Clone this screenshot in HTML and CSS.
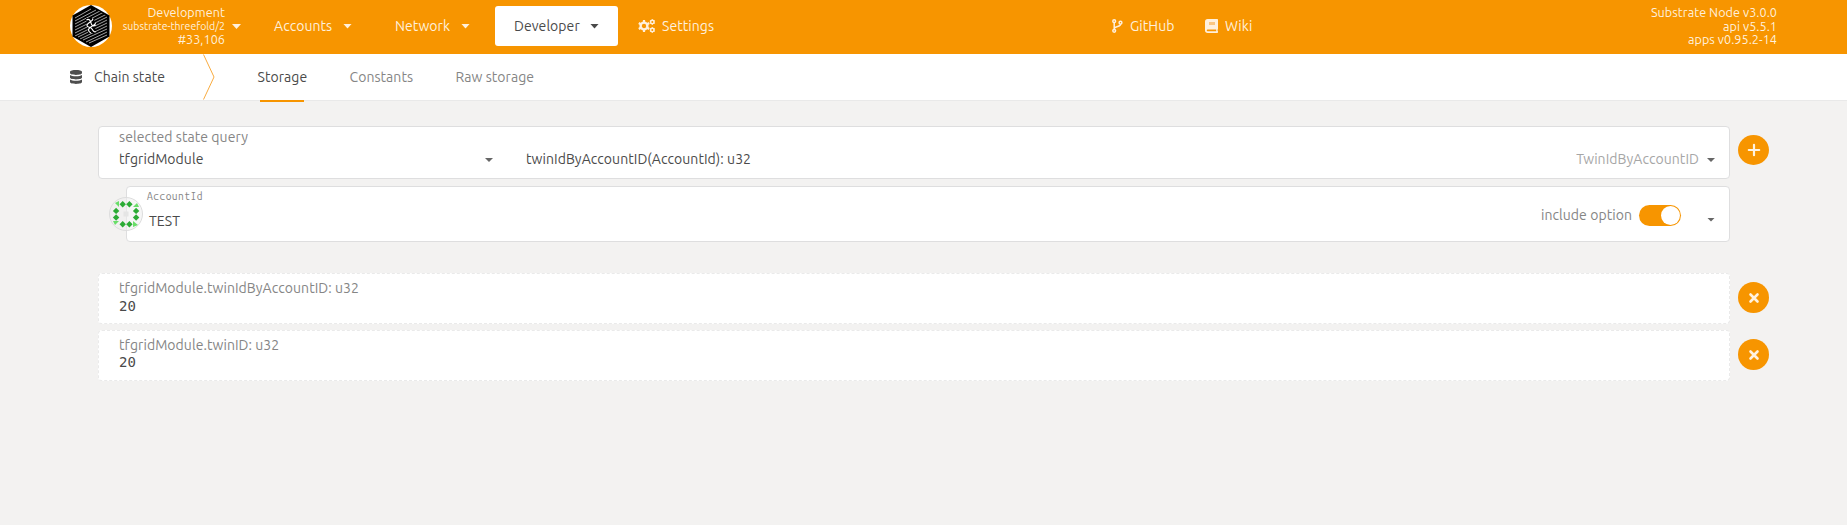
FILE: index.html
```html
<!DOCTYPE html>
<html lang="en">
<head>
<meta charset="utf-8">
<title>Chain state</title>
<link rel="stylesheet" href="styles.css">
</head>
<body>
<header class="topbar">
  <svg class="logo" width="42" height="42" viewBox="0 0 42 42">
    <defs><clipPath id="hex"><path d="M21 1 37 11V31L21 41 5 31V11Z"/></clipPath></defs>
    <circle cx="21" cy="21" r="21" fill="#fff"/>
    <path d="M21 0 39.500 10.500V31.500L21 42 2.500 31.500V10.500Z" fill="#000"/>
    <g clip-path="url(#hex)" stroke="#b4b4b4" stroke-width=".9" fill="none">
      <path d="M5 13 21 4M5 16 26 5M5 19 30 6M5 22 34 7M5 25 37 9M5 28 37 12M5 31 37 15M8 32 37 18M10 34 37 21M13 35 37 24M16 37 37 27M19 38 37 30"/>
    </g>
    <path d="M16 13h8l2 15h-8Z" fill="#000"/>
    <path d="M16.500 15c2-1.500 4 0 4.500 3s3 3.500 4.500 2M22.500 13.500c2 2-6 4.500-5.500 7s3.500 1 5 3.500 2.500 3.500 4 2.500M25 18c2 2-7 4-6.500 7 .2 1.500 1 2.500 2.500 3" fill="none" stroke="#fff" stroke-width="1.200"/>
  </svg>
  <div class="chain">
    <div class="chain-name">Development</div>
    <div class="chain-spec">substrate-threefold/2</div>
    <div class="chain-block">#33,106</div>
  </div>
  <i class="caret chain-caret"></i>
  <nav class="menu">
    <a class="menu-item accounts"><span>Accounts</span><i class="caret"></i></a>
    <a class="menu-item network"><span>Network</span><i class="caret"></i></a>
    <a class="menu-item developer"><span>Developer</span><i class="caret"></i></a>
    <a class="menu-item settings">
      <svg width="18" height="14" viewBox="0 0 18 14" fill="none" stroke="currentColor">
        <circle cx="6" cy="7" r="3.400" stroke-width="2.400"/>
        <path d="M6 1v2.500M6 10.500V13M.8 4l2 1.200M9.200 8.800l2 1.200M.8 10l2-1.200M9.200 5.200l2-1.200" stroke-width="2.200"/>
        <circle cx="14.300" cy="3" r="1.700" stroke-width="1.400"/>
        <circle cx="14.300" cy="11" r="1.700" stroke-width="1.400"/>
        <path d="M14.300 .2v1M14.300 4.800v1M11.900 1.600l.8.500M15.900 3.900l.8.500M11.900 4.400l.8-.5M15.900 2.100l.8-.5M14.300 8.200v1M14.300 12.800v1M11.900 9.600l.8.500M15.900 11.900l.8.500M11.900 12.400l.8-.5M15.900 10.100l.8-.5" stroke-width="1.300"/>
      </svg>
      <span>Settings</span></a>
  </nav>
  <nav class="links">
    <a class="menu-item github">
      <svg width="11" height="14" viewBox="0 0 11 14" fill="none" stroke="currentColor">
        <circle cx="2.200" cy="2.200" r="1.400" stroke-width="1.500"/><circle cx="2.200" cy="11.800" r="1.400" stroke-width="1.500"/><circle cx="8.500" cy="3.700" r="1.400" stroke-width="1.500"/>
        <path d="M2.200 3.500v7M8.500 5v.5c0 2.500-5.500 1.300-6.300 4" stroke-width="1.500"/>
      </svg>
      <span>GitHub</span></a>
    <a class="menu-item wiki">
      <svg width="13" height="14" viewBox="0 0 13 14">
        <path fill="currentColor" fill-rule="evenodd" d="M13 .7v9.100q0 .4-.3.600-.2.800 0 1.700.3.200.3.600v.6q0 .7-.7.700H2.700Q0 14 0 11.300V2.700Q0 0 2.700 0h9.600q.7 0 .7.700ZM11.200 10.500H2.600a.8.8 0 0 0 0 1.700h8.600Z"/>
        <path d="M4 3h6v3H4Z" fill="#fbc680"/>
      </svg>
      <span>Wiki</span></a>
  </nav>
  <div class="versions"><div>Substrate Node v3.0.0</div><div>api v5.5.1</div><div>apps v0.95.2-14</div></div>
</header>
<nav class="tabs">
  <svg class="db" width="12" height="14" viewBox="0 0 12 14" fill="#4e4e4e">
    <path d="M0 2C0-.6 12-.6 12 2v1C12 5.500 0 5.500 0 3ZM0 5c2 1.700 10 1.700 12 0v2.500C12 10 0 10 0 7.500ZM0 9.500c2 1.700 10 1.700 12 0V12c0 2.500-12 2.500-12 0Z"/>
  </svg>
  <span class="section">Chain state</span>
  <svg class="chevron" width="13" height="46" viewBox="0 0 13 46" fill="none" stroke="#f8ab40"><path d="M.5 .5 11 23 .5 45.500"/></svg>
  <a class="tab storage"><span>Storage</span></a>
  <a class="tab constants"><span>Constants</span></a>
  <a class="tab raw"><span>Raw storage</span></a>
</nav>
<main class="content">
  <div class="row">
    <section class="card query">
      <div class="query-label">selected state query</div>
      <div class="query-line">
        <span class="module">tfgridModule</span><i class="caret small"></i>
        <span class="method">twinIdByAccountID(AccountId): u32</span>
        <span class="doc">TwinIdByAccountID</span><i class="caret small"></i>
      </div>
    </section>
    <button class="round add"><svg width="14" height="14" viewBox="0 0 14 14"><path d="M7 1.800v10.400M1.800 7h10.400" stroke="#fff2e0" stroke-width="2.200" stroke-linecap="round"/></svg></button>
  </div>
  <section class="card param">
    <svg class="identicon" width="34" height="34" viewBox="0 0 34 34">
      <circle cx="17" cy="17" r="16.500" fill="#eee" fill-opacity=".55" stroke="#ddd"/>
      <path d="M14.500 14.500h5v5h-5Z" fill="#e5e5e5"/>
      <g fill="#2bab35">
        <path id="dot" d="m13.700 4 3.200 3.200-3.200 3.200-3.200-3.200Z"/>
        <use href="#dot" x="6.700"/><use href="#dot" y="20"/><use href="#dot" x="6.700" y="20"/>
        <use href="#dot" x="-6.600" y="6.700"/><use href="#dot" x="-6.600" y="13.300"/>
        <use href="#dot" x="13.400" y="6.700"/><use href="#dot" x="13.400" y="13.300"/>
      </g>
      <path d="M6 6l4-2v6ZM24 10l4-4 2 4ZM4 24h6l-4 4ZM24 24l5 4-5 2Z" fill="#68de68"/>
    </svg>
    <div class="param-body">
      <div class="param-label">AccountId</div>
      <div class="param-value">TEST</div>
    </div>
    <span class="include">include option</span>
    <div class="toggle"><div class="knob"></div></div>
    <i class="caret small"></i>
  </section>
  <div class="results">
    <div class="row">
      <section class="card result"><div class="result-key">tfgridModule.twinIdByAccountID: u32</div><div class="result-value">20</div></section>
      <button class="round"><svg width="14" height="14" viewBox="0 0 14 14"><path d="M3.500 3.500l7 7M10.500 3.500l-7 7" stroke="#fff2e0" stroke-width="2.600" stroke-linecap="round"/></svg></button>
    </div>
    <div class="row">
      <section class="card result"><div class="result-key">tfgridModule.twinID: u32</div><div class="result-value last">20</div></section>
      <button class="round"><svg width="14" height="14" viewBox="0 0 14 14"><path d="M3.500 3.500l7 7M10.500 3.500l-7 7" stroke="#fff2e0" stroke-width="2.600" stroke-linecap="round"/></svg></button>
    </div>
  </div>
</main>
</body>
</html>
```
FILE: styles.css
```css
* { box-sizing: border-box; }
body {
  margin: 0;
  min-height: 525px;
  background: #f3f2f1;
  color: #4a4a4a;
  font: 14px/20px Ubuntu, "Noto Sans", sans-serif;
  letter-spacing: 0.06px;
  white-space: nowrap;
}
.topbar {
  display: flex;
  height: 54px;
  padding-left: 70px;
  padding-right: 70px;
  background: #f79500;
  color: #fff0dc;
}
.logo { margin-top: 5px; flex: none; }
.chain {
  width: 113px;
  padding-top: 6px;
  text-align: right;
  font-size: 12.600px;
  line-height: 13.600px;
}
.chain-spec { font-size: 10.500px; letter-spacing: 0; }
.caret {
  flex: none;
  width: 9px;
  height: 5px;
  background: currentColor;
  clip-path: polygon(0 0, 100% 0, 50% 100%);
}
.caret.small { width: 8px; height: 4px; background: #666; }
.chain-caret { margin: 24px 0 0 7px; }
.menu { display: flex; width: 871px; }
.links { display: flex; width: 400px; }
.menu-item { display: flex; align-items: center; height: 40px; margin-top: 6px; }
.accounts { margin-left: 33px; width: 121px; }
.accounts span { width: 69px; }
.network span { width: 66px; }
.network { width: 100px; }
.developer {
  width: 123px;
  padding-left: 19px;
  border-radius: 3px;
  background: #fff;
  color: #4a4a4a;
}
.developer span { width: 76px; }
.settings { margin-left: 20px; gap: 6px; }
.github { width: 93px; gap: 7px; }
.wiki { gap: 7px; }
.versions {
  margin-left: auto;
  padding-top: 6px;
  text-align: right;
  font-size: 12.600px;
  line-height: 13.600px;
}
.tabs {
  display: flex;
  align-items: center;
  height: 47px;
  padding-left: 70px;
  background: #fff;
  border-bottom: 1px solid #e9e9e9;
}
.section { width: 109px; margin-left: 12px; }
.chevron { margin-right: 41.5px; }
.tab { position: relative; color: #858585; line-height: 46px; }
.storage { width: 92px; color: #4a4a4a; }
.storage::after {
  content: "";
  position: absolute;
  left: 2.5px;
  bottom: -2px;
  width: 44px;
  height: 2px;
  background: #f79500;
}
.constants { width: 106px; }
.content { padding: 25px 78px 0 98px; }
.row { display: flex; align-items: flex-start; gap: 8px; }
.card {
  flex: 1;
  background: #fff;
  border: 1px solid #dededf;
  border-radius: 4px;
}
.query { height: 53px; padding: 0 14px 0 20px; }
.query-label { color: #858585; line-height: 21px; }
.query-line { display: flex; align-items: center; height: 22px; }
.query-line .small { margin-top: 2px; }
.module { width: 366px; }
.method { margin-left: 33px; flex: 1; }
.doc { color: #a6a6a6; margin-right: 8px; }
.round {
  display: flex;
  align-items: center;
  justify-content: center;
  width: 31px;
  height: 31px;
  margin-top: 9px;
  padding: 0;
  border: 0;
  border-radius: 50%;
  background: #f79500;
}
.round.add { height: 30px; }
.param {
  position: relative;
  display: flex;
  align-items: center;
  height: 56px;
  margin: 7px 39px 0 28px;
  padding: 0 14px 0 20px;
}
.identicon { position: absolute; left: -18px; top: 10px; }
.param-body { flex: 1; align-self: flex-start; }
.param-label {
  color: #858585;
  font: 10.300px/18px "Ubuntu Mono", "DejaVu Sans Mono", monospace;
  letter-spacing: 0.45px;
}
.param-value { padding-left: 2px; margin-top: 6px; }
.include { color: #858585; margin: 2px 7px 0 0; }
.toggle {
  display: flex;
  justify-content: flex-end;
  width: 42px;
  height: 21px;
  margin: 2px 26px 0 0;
  padding: 1px;
  border-radius: 11px;
  background: #f79500;
}
.knob { width: 19px; height: 19px; border-radius: 50%; background: #fff; }
.param .caret { margin-top: 11px; }
.results { display: flex; flex-direction: column; gap: 6px; margin-top: 31px; }
.result { height: 51px; padding: 5px 20px; border: 1px dashed #eaeaea; }
.result-key { color: #858585; line-height: 19px; }
.result-value {
  font: 14px/17px "DejaVu Sans Mono", monospace;
}
.result-value.last { margin-top: -1px; }
```
